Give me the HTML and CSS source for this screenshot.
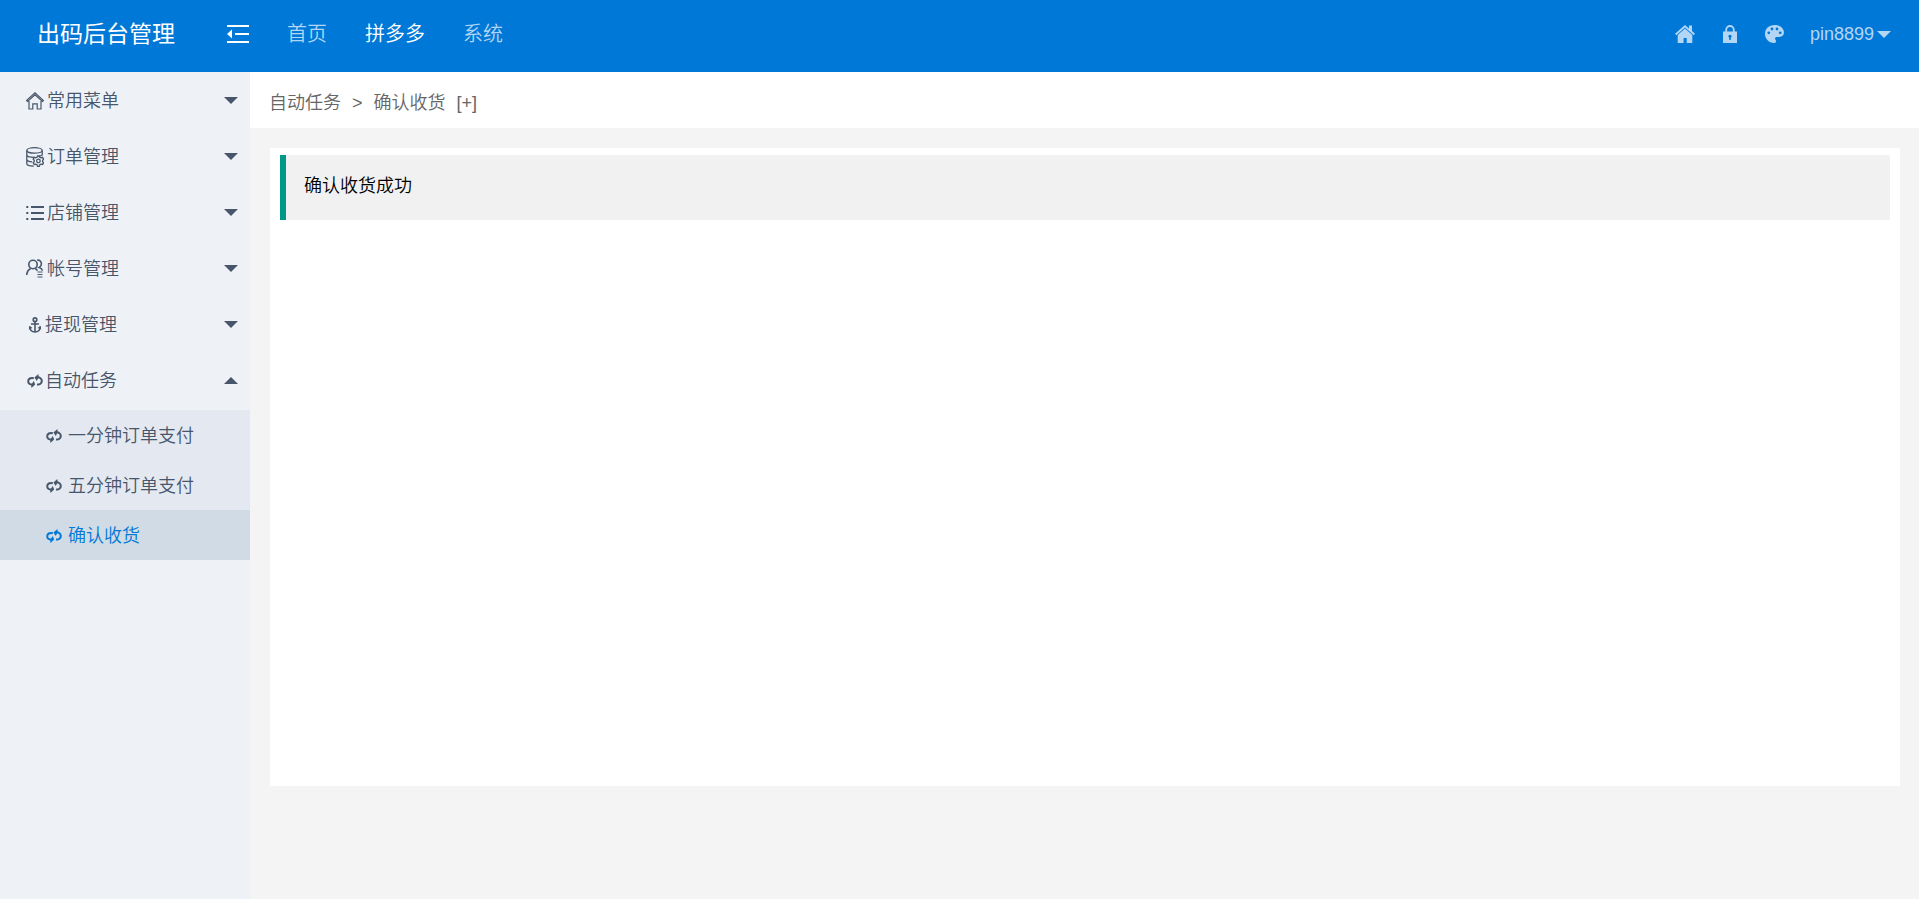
FILE: index.html
```html
<!DOCTYPE html>
<html lang="zh-CN">

<head>
  <meta charset="UTF-8">
  <meta name="viewport" content="width=device-width, initial-scale=1.0">
  <title>出码后台管理</title>
  <link rel="stylesheet" href="styles.css">
</head>

<body>
  <svg class="sprite" aria-hidden="true">
    <symbol id="icon-sync" viewBox="0 0 16 14">
      <path d="M6.800 4.200C3.600 3.400 1.200 4.800 1.200 7.200c0 2.200 1.600 3.600 4.400 3.400M10 3.400c2.800-.3 4.800 1.200 4.800 3.600 0 2.400-2 3.800-4.800 3.400" fill="none" stroke="currentColor" stroke-width="2"/>
      <path d="M8.200 10.400L4.400 14l-.2-3.200L6.800 7zM7.400 3.600L11.400 0l.2 3.200L9.800 7z" fill="currentColor"/>
    </symbol>
    <symbol id="icon-home" viewBox="0 0 20 18">
      <path d="M10 0l4 3.500V.5h3v5.600l3 2.700-1.200 1.400L10 2.400 1.200 10.200 0 8.800z" fill="currentColor"/>
      <path d="M10 3.600l7.300 6.400v8h-5.600v-5H8.600v5H2.700v-8z" fill="currentColor"/>
    </symbol>
  </svg>

  <header class="header">
    <a class="logo" href="#">出码后台管理</a>
    <button class="toggle" type="button" aria-label="收起菜单">
      <svg width="22" height="18" viewBox="0 0 22 18">
        <path d="M0 1h22M8 9h14M0 17h22" stroke="currentColor" stroke-width="2"/>
        <path d="M0 9l5-4.500v9z" fill="currentColor"/>
      </svg>
    </button>
    <nav class="top-nav">
      <a href="#">首页</a>
      <a class="active" href="#">拼多多</a>
      <a href="#">系统</a>
    </nav>
    <div class="tools">
      <a href="#" aria-label="主页"><svg width="20" height="18"><use href="#icon-home"/></svg></a>
      <a href="#" aria-label="锁屏">
        <svg width="14" height="18" viewBox="0 0 14 18">
          <path d="M3.200 7V4.800a3.800 3.800 0 0 1 7.600 0V7" fill="none" stroke="currentColor" stroke-width="1.800"/>
          <path d="M0 6.500h14V18H0zM7 9.800a1.600 1.600 0 0 0-.8 3V15h1.600v-2.200a1.600 1.600 0 0 0-.8-3z" fill="currentColor" fill-rule="evenodd"/>
        </svg>
      </a>
      <a href="#" aria-label="主题">
        <svg width="19" height="18" viewBox="0 0 19 18">
          <path d="M9.500 0C4 0 0 3.800 0 8.800 0 14 4 18 9 18c1.300 0 2-.8 2-1.800 0-1.200-1-1.400-1-2.600 0-1 .8-1.600 1.900-1.600h2.400C17 12 19 10.200 19 7.600 19 3.200 14.800 0 9.500 0zM3.800 6.400a1.400 1.400 0 1 1 0 2.800 1.400 1.400 0 0 1 0-2.800zM7 2.600a1.400 1.400 0 1 1 0 2.800 1.400 1.400 0 0 1 0-2.800zM12 2.600a1.400 1.400 0 1 1 0 2.800 1.400 1.400 0 0 1 0-2.800zM15.200 6.400a1.400 1.400 0 1 1 0 2.800 1.400 1.400 0 0 1 0-2.800z" fill="currentColor" fill-rule="evenodd"/>
        </svg>
      </a>
      <a class="user" href="#">pin8899<span class="caret"></span></a>
    </div>
  </header>

  <div class="layout">
    <aside class="sidebar">
      <ul class="menu">
        <li>
          <a href="#">
            <svg width="18" height="20" viewBox="0 0 18 20" fill="none" stroke="currentColor" stroke-width="1.200">
              <path d="M.6 9.400L9 1.800l8.400 7.600-.9 1L9 3.800 1.500 10.400zM3 10v8h3.800v-5.200h4.400V18H15v-8"/>
            </svg>
            <span>常用菜单</span><span class="caret"></span>
          </a>
        </li>
        <li>
          <a href="#">
            <svg width="18" height="20" viewBox="0 0 18 20" fill="none" stroke="currentColor" stroke-width="1.300">
              <ellipse cx="8.500" cy="3.400" rx="7.700" ry="2.700"/>
              <path d="M.8 3.400v13c0 1.400 3 2.600 7 2.700M16.200 3.400v5.200M.8 7.800c0 1.500 3.400 2.600 7.700 2.600M16.200 7.800c-.5 1-2.500 1.600-4 1.900M.8 12.200c0 1.300 2.500 2.400 5.400 2.600"/>
              <circle cx="12.400" cy="14" r="1.800"/>
              <path d="M11.500 8.900h1.800l.5 1.400 1.300.6 1.500-.5 1 1.700-1 1.100v1.500l1 1.200-1 1.600-1.500-.4-1.300.7-.5 1.500h-1.800l-.5-1.500-1.300-.7-1.500.4-1-1.600 1-1.200v-1.500l-1-1.100 1-1.700 1.500.5 1.300-.6z"/>
            </svg>
            <span>订单管理</span><span class="caret"></span>
          </a>
        </li>
        <li>
          <a href="#">
            <svg width="18" height="16" viewBox="0 0 18 16" fill="none" stroke="currentColor" stroke-width="2">
              <path d="M5 2h13M5 8h13M5 14h13M.3 2h2M.3 8h2M.3 14h2"/>
            </svg>
            <span>店铺管理</span><span class="caret"></span>
          </a>
        </li>
        <li>
          <a href="#">
            <svg width="18" height="20" viewBox="0 0 18 20" fill="none" stroke="currentColor" stroke-width="1.600">
              <circle cx="7" cy="5.500" r="4.200"/>
              <path d="M.8 16c.1-3.400 1.700-5.600 3.900-6.600M9.300 9.400l2.200 2.200M11.200 1.200c2.600-.3 4.200 1.200 4.200 3.600 0 1.700-.8 3-2.200 3.600 1.800.6 2.900 1.500 3.300 3.200"/>
              <path d="M11.500 13h5M11.500 15.500h5M11.500 18h5" stroke-width="1.200"/>
            </svg>
            <span>帐号管理</span><span class="caret"></span>
          </a>
        </li>
        <li>
          <a class="narrow" href="#">
            <svg width="16" height="16" viewBox="0 0 16 16" fill="none" stroke="currentColor" stroke-width="1.600">
              <circle cx="8" cy="2.700" r="1.800"/>
              <path d="M8 4.500V15M4 7h8M2.800 9.500c-.3 3.400 2 5.500 5.200 5.500s5.500-2.100 5.200-5.500"/>
              <path d="M1.800 12.400l.7-3.600 2.900 2.300zM14.200 12.400l-.7-3.600-2.900 2.300z" fill="currentColor" stroke="none"/>
            </svg>
            <span>提现管理</span><span class="caret"></span>
          </a>
        </li>
        <li>
          <a class="narrow" href="#">
            <svg width="16" height="14"><use href="#icon-sync"/></svg>
            <span>自动任务</span><span class="caret up"></span>
          </a>
          <ul class="submenu">
            <li><a href="#"><svg width="16" height="14"><use href="#icon-sync"/></svg><span>一分钟订单支付</span></a></li>
            <li><a href="#"><svg width="16" height="14"><use href="#icon-sync"/></svg><span>五分钟订单支付</span></a></li>
            <li><a class="active" href="#"><svg width="16" height="14"><use href="#icon-sync"/></svg><span>确认收货</span></a></li>
          </ul>
        </li>
      </ul>
    </aside>

    <main class="main">
      <nav class="breadcrumb">
        <a href="#">自动任务</a>
        <span>&gt;</span>
        <a href="#">确认收货</a>
        <a href="#">[+]</a>
      </nav>
      <section class="card">
        <blockquote class="quote">确认收货成功</blockquote>
      </section>
    </main>
  </div>
</body>

</html>
```

FILE: styles.css
```css
* {
  box-sizing: border-box;
}

body {
  display: flex;
  flex-direction: column;
  min-height: 100vh;
  margin: 0;
  font-family: "Liberation Sans", "Noto Sans CJK SC", sans-serif;
  font-size: 18px;
  font-weight: 350;
  line-height: 28px;
  color: #000;
  background-color: #f4f4f4;
}

a {
  color: inherit;
  text-decoration: none;
}

ul {
  margin: 0;
  padding: 0;
  list-style: none;
}

svg {
  display: block;
  flex: none;
}

.sprite {
  display: none;
}

/* header */
.header {
  display: flex;
  align-items: center;
  height: 72px;
  padding-bottom: 4px;
  color: #fff;
  background-color: #0078d8;
}

.logo {
  width: 212px;
  font-size: 23px;
  font-weight: 400;
  text-align: center;
}

.toggle {
  margin: 0 19px 0 15px;
  padding: 0;
  border: none;
  color: #fff;
  background: none;
  cursor: pointer;
}

.top-nav {
  display: flex;
  font-size: 20px;
}

.top-nav a {
  padding: 0 19px;
  color: #b2d6f3;
}

.top-nav .active {
  color: #fff;
}

.tools {
  display: flex;
  align-items: center;
  gap: 28px;
  margin-left: auto;
  padding-right: 28px;
  color: #b2d6f3;
}

.user {
  display: flex;
  align-items: center;
  gap: 3px;
  margin-left: -2px;
}

.caret {
  border: 7px solid transparent;
  border-top-color: currentColor;
  border-bottom: none;
}

.caret.up {
  border-top: none;
  border-bottom: 7px solid currentColor;
}

/* sidebar */
.layout {
  display: flex;
  flex: 1;
}

.sidebar {
  flex: none;
  width: 250px;
  color: #47566b;
  background-color: #eef2f7;
}

.menu {
  padding-top: 1px;
}

.menu > li > a {
  display: flex;
  align-items: center;
  gap: 3px;
  height: 56px;
  padding: 0 12px 0 26px;
}

.menu > li > .narrow {
  gap: 2px;
  padding-left: 27px;
}

.menu .caret {
  margin-bottom: 2px;
  margin-left: auto;
}

.submenu {
  margin-top: 1px;
  background-color: #e4e9f1;
}

.submenu a {
  display: flex;
  align-items: center;
  gap: 6px;
  height: 50px;
  padding-top: 2px;
  padding-left: 46px;
}

.submenu .active {
  color: #0078d8;
  background-color: #d0dbe5;
}

/* content */
.main {
  display: flex;
  flex: 1;
  flex-direction: column;
}

.breadcrumb {
  display: flex;
  align-items: center;
  gap: 11px;
  height: 56px;
  padding: 5px 19px 0;
  color: #666;
  background-color: #fff;
}

.card {
  min-height: 71vh;
  margin: 20px 19px 20px 20px;
  padding: 7px 10px;
  background-color: #fff;
}

.quote {
  margin: 0;
  padding: 17px 18px 20px;
  border-left: 6px solid #009688;
  border-radius: 0 2px 2px 0;
  background-color: #f1f1f1;
}
```
